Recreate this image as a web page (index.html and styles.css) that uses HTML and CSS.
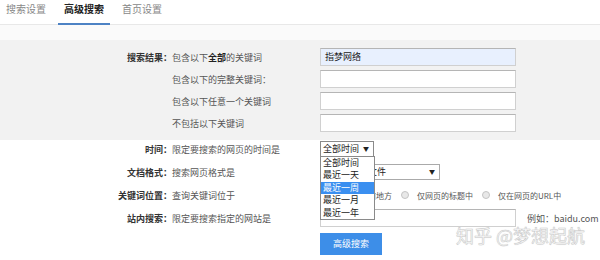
FILE: index.html
```html
<!DOCTYPE html>
<html lang="zh">
<head>
<meta charset="utf-8">
<link rel="stylesheet" href="styles.css">
</head>
<body>
<div class="tabs">
  <div class="tab">搜索设置</div>
  <div class="tab active">高级搜索</div>
  <div class="tab">首页设置</div>
</div>
<div class="band"></div>
<div class="sec1">
  <div class="row">
    <div class="lbl">搜索结果：</div>
    <div class="desc">包含以下<b>全部</b>的关键词</div>
    <div class="input filled">指梦网络</div>
  </div>
  <div class="row">
    <div class="lbl"></div>
    <div class="desc">包含以下的完整关键词：</div>
    <div class="input"></div>
  </div>
  <div class="row">
    <div class="lbl"></div>
    <div class="desc">包含以下任意一个关键词</div>
    <div class="input"></div>
  </div>
  <div class="row">
    <div class="lbl"></div>
    <div class="desc">不包括以下关键词</div>
    <div class="input"></div>
  </div>
</div>
<div class="sec2">
  <div class="row r-time">
    <div class="lbl">时间：</div>
    <div class="desc">限定要搜索的网页的时间是</div>
    <div class="ctl">
      <div class="select s-time">全部时间<span class="arr">▼</span>
        <div class="dropdown">
          <div class="opt">全部时间</div>
          <div class="opt">最近一天</div>
          <div class="opt sel">最近一周</div>
          <div class="opt">最近一月</div>
          <div class="opt">最近一年</div>
        </div>
      </div>
    </div>
  </div>
  <div class="row r-fmt">
    <div class="lbl">文档格式：</div>
    <div class="desc">搜索网页格式是</div>
    <div class="ctl">
      <div class="select s-fmt">所有网页和文件<span class="arr">▼</span></div>
    </div>
  </div>
  <div class="row r-pos">
    <div class="lbl">关键词位置：</div>
    <div class="desc">查询关键词位于</div>
    <div class="ctl radios">
      <span class="ropt"><span class="radio"></span>网页的任何地方</span>
      <span class="ropt"><span class="radio"></span>仅网页的标题中</span>
      <span class="ropt"><span class="radio"></span>仅在网页的URL中</span>
    </div>
  </div>
  <div class="row r-site">
    <div class="lbl">站内搜索：</div>
    <div class="desc">限定要搜索指定的网站是</div>
    <div class="ctl site">
      <div class="input"></div>
      <span class="eg">例如：baidu.com</span>
    </div>
  </div>
  <div class="btnrow">
    <div class="btn">高级搜索</div>
  </div>
</div>
<div class="watermark">知乎 @梦想起航</div>
</body>
</html>
```
FILE: styles.css
```css
html, body {
  margin: 0;
  padding: 0;
}
body {
  width: 600px;
  height: 260px;
  overflow: hidden;
  position: relative;
  background: #fff;
  font-family: "Noto Sans CJK SC", "Liberation Sans", sans-serif;
  font-size: 9px;
  color: #555;
}
.tabs {
  display: flex;
  gap: 6px;
  height: 25px;
  border-bottom: 1px solid #e8e8e8;
  box-sizing: border-box;
}
.tab {
  padding: 2px 6px 0;
  font-size: 10px;
  line-height: 13px;
  color: #888;
  height: 25px;
  box-sizing: border-box;
}
.tab.active {
  color: #222;
  font-weight: bold;
  border-bottom: 2px solid #4d82c4;
}
.band {
  height: 15px;
  background: #fafafa;
}
.sec1 {
  background: #f2f2f2;
  padding: 8px 0 8px;
}
.row {
  display: grid;
  grid-template-columns: 172px 148px 1fr;
  align-items: center;
}
.sec1 .row {
  height: 18px;
  margin-bottom: 4px;
}
.sec1 .row:last-child {
  margin-bottom: 0;
}
.lbl {
  text-align: right;
  font-weight: bold;
  color: #333;
  white-space: nowrap;
}
.desc {
  white-space: nowrap;
  color: #555;
}
.desc b {
  color: #222;
}
.input {
  width: 196px;
  height: 18px;
  box-sizing: border-box;
  background: #fff;
  border: 1px solid #d0d0d0;
  border-top-color: #b5b5b5;
  padding-left: 4px;
  line-height: 16px;
  color: #222;
}
.input.filled {
  background: #e8f0fe;
}
.sec2 {
  padding-top: 1px;
}
.r-time { height: 16px; }
.r-fmt { height: 16px; margin-top: 7px; }
.r-pos { height: 16px; margin-top: 7px; }
.r-site { height: 18px; margin-top: 6px; }
.ctl {
  display: flex;
  align-items: center;
  white-space: nowrap;
}
.select {
  position: relative;
  height: 16px;
  box-sizing: border-box;
  border: 1px solid #8a8a8a;
  background: #fff;
  color: #222;
  line-height: 14px;
  padding-left: 2px;
}
.s-time { width: 54px; }
.s-fmt { width: 120px; border-color: #aaa; }
.arr {
  position: absolute;
  right: 4px;
  top: 0;
  font-size: 6px;
  color: #222;
}
.dropdown {
  position: absolute;
  left: -1px;
  top: 14px;
  width: 53px;
  border: 1px solid #8a8a8a;
  background: #fff;
  z-index: 5;
}
.opt {
  height: 12.4px;
  line-height: 12.4px;
  padding-left: 2px;
  color: #222;
}
.opt.sel {
  background: #3a8ff0;
  color: #fff;
}
.radios {
  gap: 9px;
  font-size: 8px;
  color: #555;
}
.ropt {
  display: flex;
  align-items: center;
  gap: 8px;
}
.radio {
  width: 8px;
  height: 8px;
  box-sizing: border-box;
  border-radius: 50%;
  border: 1px solid #c4c4c4;
  background: #e8e8e8;
}
.site .eg {
  margin-left: 11px;
  color: #555;
}
.btnrow {
  margin-top: 6px;
  padding-left: 320px;
}
.btn {
  width: 62px;
  height: 22px;
  line-height: 22px;
  text-align: center;
  background: #3d8ee8;
  color: #fff;
}
.watermark {
  position: absolute;
  left: 456px;
  top: 224px;
  font-size: 18px;
  line-height: 22px;
  color: rgba(255, 255, 255, 0.85);
  -webkit-text-stroke: 0.5px rgba(170, 170, 170, 0.6);
  text-shadow: 0 0 1px rgba(180, 180, 180, 0.5);
  white-space: nowrap;
  z-index: 6;
}
```
